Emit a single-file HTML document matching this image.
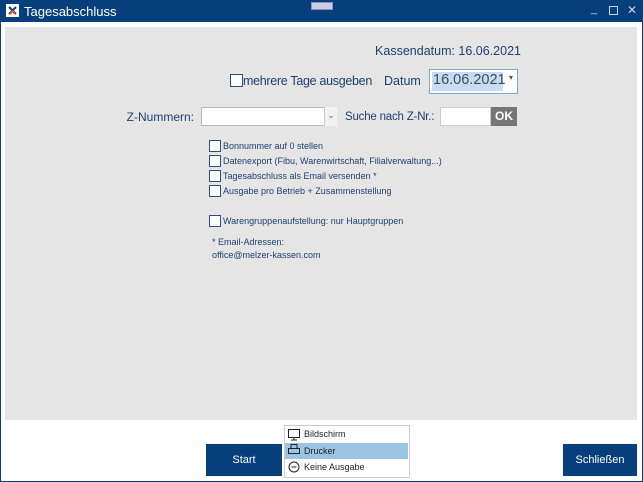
<!DOCTYPE html><html><head><style>
body{margin:0;width:643px;height:482px;position:relative;background:#fff;font-family:"Liberation Sans",sans-serif;overflow:hidden;color:#1e3f6f}
.a{position:absolute;white-space:nowrap}
.cb{position:absolute;width:10px;height:10px;border:1px solid #2c4f80;background:#fff}
.s{font-size:9px}
</style></head><body>
<div class="a" style="left:0;top:0;width:643px;height:22px;background:#073f7d"></div>
<div class="a" style="left:0;top:22px;width:1px;height:460px;background:#073f7d"></div>
<div class="a" style="right:0;top:22px;width:1px;height:460px;background:#073f7d"></div>
<div class="a" style="left:0;bottom:0;width:643px;height:1px;background:#073f7d"></div>
<div class="a" style="left:6px;top:4px;width:13px;height:13px;background:#fff"></div>
<svg class="a" style="left:6px;top:4px" width="13" height="13"><path d="M3 3l7 7M10 3l-7 7" stroke="#073f7d" stroke-width="2"/><path d="M4 10l2.5-3 2.5 3" stroke="#e05a1c" stroke-width="2" fill="none"/></svg>
<div class="a" style="left:24px;top:4px;color:#fff;font-size:13px">Tagesabschluss</div>
<div class="a" style="left:311px;top:2px;width:20px;height:6px;background:#c8cde8;border:1px solid #8890c0"></div>
<div class="a" style="left:591px;top:3px;color:#c8d2e2;font-size:11px">_</div>
<div class="a" style="left:609px;top:6px;width:7px;height:7px;border:1px solid #c8d2e2"></div>
<div class="a" style="left:627px;top:3px;color:#c8d2e2;font-size:12px">✕</div>
<div class="a" style="left:5px;top:27px;width:632px;height:393px;background:#e5e5e5"></div>
<div class="a" style="right:122px;top:44px;font-size:12.5px">Kassendatum: 16.06.2021</div>
<div class="cb" style="left:230px;top:74px;width:11px;height:11px"></div>
<div class="a" style="left:243px;top:74px;font-size:12.5px;letter-spacing:-0.3px">mehrere Tage ausgeben</div>
<div class="a" style="left:384px;top:74px;font-size:12.5px">Datum</div>
<div class="a" style="left:429px;top:69px;width:87px;height:23px;background:#fff;border:1px solid #7aa9d6"></div>
<div class="a" style="left:432px;top:72px;width:71px;height:19px;background:#c6dcf0"></div>
<div class="a" style="left:433px;top:72px;font-size:14.5px;color:#3b4d66">16.06.2021</div>
<div class="a" style="left:509px;top:73px;font-size:8px;color:#555">▾</div>
<div class="a" style="right:449px;top:110px;font-size:12px">Z-Nummern:</div>
<div class="a" style="left:201px;top:107px;width:134px;height:17px;background:#fff;border:1px solid #b8b8b8"></div>
<div class="a" style="left:324px;top:107px;width:12px;height:19px;border-left:1px solid #ccc;background:#f2f2f2;font-size:9px;color:#666;text-align:center;line-height:17px">⌄</div>
<div class="a" style="left:345px;top:111px;font-size:11.5px;letter-spacing:-0.2px">Suche nach Z-Nr.:</div>
<div class="a" style="left:440px;top:107px;width:49px;height:17px;background:#fff;border:1px solid #ccc"></div>
<div class="a" style="left:491px;top:107px;width:26px;height:19px;background:#767676;color:#fff;font-weight:bold;font-size:12px;text-align:center;line-height:19px">OK</div>
<div class="cb" style="left:209px;top:140px"></div><div class="a s" style="left:223px;top:141px">Bonnummer auf 0 stellen</div>
<div class="cb" style="left:209px;top:155px"></div><div class="a s" style="left:223px;top:156px">Datenexport (Fibu, Warenwirtschaft, Filialverwaltung...)</div>
<div class="cb" style="left:209px;top:170px"></div><div class="a s" style="left:223px;top:171px">Tagesabschluss als Email versenden *</div>
<div class="cb" style="left:209px;top:185px"></div><div class="a s" style="left:223px;top:186px">Ausgabe pro Betrieb + Zusammenstellung</div>
<div class="cb" style="left:209px;top:215px"></div><div class="a s" style="left:223px;top:216px">Warengruppenaufstellung: nur Hauptgruppen</div>
<div class="a s" style="left:212px;top:237px">* Email-Adressen:</div>
<div class="a s" style="left:212px;top:250px">office@melzer-kassen.com</div>
<div class="a" style="left:206px;top:444px;width:76px;height:32px;background:#073f7d;color:#fff;font-size:11px;text-align:center;line-height:32px">Start</div>
<div class="a" style="left:563px;top:444px;width:74px;height:32px;background:#073f7d;color:#fff;font-size:11px;text-align:center;line-height:32px">Schließen</div>
<div class="a" style="left:284px;top:425px;width:124px;height:51px;background:#fff;border:1px solid #ccc"></div>
<div class="a" style="left:285px;top:443px;width:123px;height:16px;background:#9bc3e4"></div>
<svg class="a" style="left:287px;top:428px" width="14" height="46" fill="none" stroke="#222"><rect x="1.5" y="1.5" width="11" height="8"/><path d="M7 9.5v2M4 12h6"/><rect x="4" y="16.5" width="6" height="4"/><rect x="1.5" y="20.5" width="11" height="5"/><circle cx="7" cy="39" r="5"/><path d="M4.5 39h5"/></svg>
<div class="a" style="left:304px;top:429px;font-size:9px;color:#222">Bildschirm</div>
<div class="a" style="left:304px;top:446px;font-size:9px;color:#222">Drucker</div>
<div class="a" style="left:304px;top:462px;font-size:9px;color:#222">Keine Ausgabe</div>
</body></html>
